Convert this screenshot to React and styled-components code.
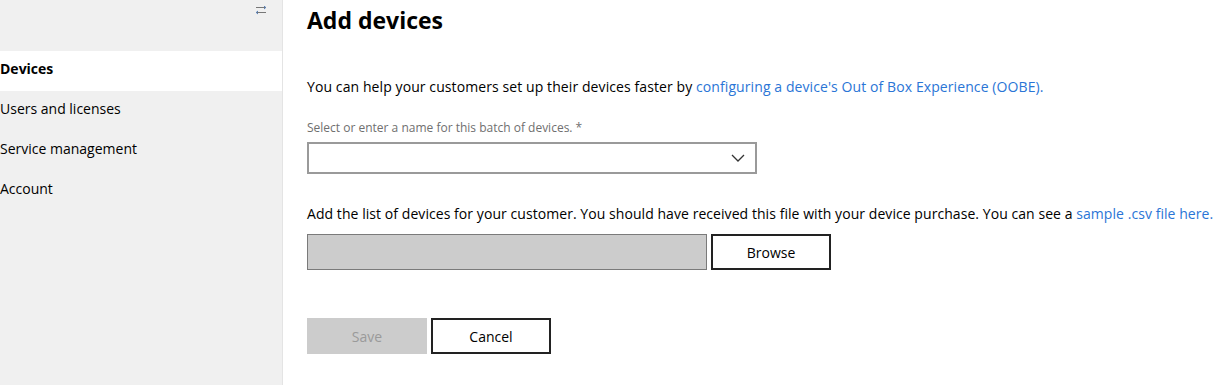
import React from "react";
import styled, { createGlobalStyle } from "styled-components";

const GlobalStyle = createGlobalStyle`
  html, body {
    margin: 0;
    padding: 0;
    background: #fff;
    font-family: "Open Sans", "Noto Sans", sans-serif;
    color: #000;
  }
`;

const navItems = [
  { id: "devices", label: "Devices" },
  { id: "users", label: "Users and licenses" },
  { id: "service", label: "Service management" },
  { id: "account", label: "Account" }
];

const ToggleIcon = () => (
  <svg width="12" height="9" viewBox="0 0 12 9" fill="none">
    <path d="M1 1.5H10.5" stroke="#777" strokeWidth="1" />
    <path d="M9 0L10.8 1.5L9 3" stroke="#4a78b8" strokeWidth="1" />
    <path d="M11 6.5H1.5" stroke="#777" strokeWidth="1" />
    <path d="M3 5L1.2 6.5L3 8" stroke="#4a78b8" strokeWidth="1" />
  </svg>
);

const Chevron = () => (
  <svg width="14" height="8" viewBox="0 0 14 8" fill="none">
    <path d="M1 1L7 7L13 1" stroke="#333" strokeWidth="1.3" />
  </svg>
);

const App = () => {
  const active = "devices";
  return (
    <Wrapper>
      <GlobalStyle />
      <Sidebar>
        <SidebarTop>
          <ToggleButton aria-label="Collapse">
            <ToggleIcon />
          </ToggleButton>
        </SidebarTop>
        {navItems.map(item => (
          <NavItem key={item.id} $active={item.id === active}>
            {item.label}
          </NavItem>
        ))}
      </Sidebar>
      <Main>
        <Title>Add devices</Title>
        <Intro>
          You can help your customers set up their devices faster by{" "}
          <Link href="#">configuring a device's Out of Box Experience (OOBE).</Link>
        </Intro>
        <Label>Select or enter a name for this batch of devices. *</Label>
        <SelectBox>
          <Chevron />
        </SelectBox>
        <Text>
          Add the list of devices for your customer. You should have received this
          file with your device purchase. You can see a{" "}
          <Link href="#">sample .csv file here.</Link>
        </Text>
        <FileRow>
          <FileField />
          <Button>Browse</Button>
        </FileRow>
        <Actions>
          <Button $disabled>Save</Button>
          <Button>Cancel</Button>
        </Actions>
      </Main>
    </Wrapper>
  );
};

const Wrapper = styled.div`
  display: flex;
  height: 385px;
  overflow: hidden;
`;

const Sidebar = styled.nav`
  width: 282px;
  flex-shrink: 0;
  background: #f0f0f0;
  border-right: 1px solid #e4e4e4;
  display: flex;
  flex-direction: column;
`;

const SidebarTop = styled.div`
  height: 51px;
  display: flex;
  justify-content: flex-end;
  align-items: flex-start;
  padding-right: 15px;
  box-sizing: border-box;
`;

const ToggleButton = styled.button`
  border: none;
  background: transparent;
  padding: 0;
  margin-top: 6px;
  width: 12px;
  height: 9px;
  display: flex;
`;

const NavItem = styled.div`
  height: 40px;
  line-height: 36px;
  padding-bottom: 4px;
  box-sizing: border-box;
  font-size: 14px;
  white-space: nowrap;
  background: ${p => (p.$active ? "#fff" : "transparent")};
  font-weight: ${p => (p.$active ? 700 : 400)};
`;

const Main = styled.main`
  flex: 1;
  padding-left: 24px;
  display: flex;
  flex-direction: column;
  align-items: flex-start;
  white-space: nowrap;
`;

const Title = styled.h1`
  margin: 0;
  font-size: 23px;
  font-weight: 700;
  line-height: 40px;
`;

const Intro = styled.p`
  margin: 36px 0 0;
  font-size: 14px;
  letter-spacing: 0.09px;
  line-height: 22px;
`;

const Text = styled.p`
  margin: 29px 0 0;
  font-size: 14px;
  letter-spacing: 0.06px;
  line-height: 22px;
`;

const Link = styled.a`
  color: #2a75d6;
  text-decoration: none;
`;

const Label = styled.div`
  margin-top: 21px;
  font-size: 12px;
  line-height: 18px;
  color: #6f6f6f;
`;

const SelectBox = styled.div`
  margin-top: 5px;
  width: 450px;
  height: 32px;
  box-sizing: border-box;
  border: 2px solid #9a9a9a;
  display: flex;
  align-items: center;
  justify-content: flex-end;
  padding-right: 10px;
`;

const FileRow = styled.div`
  margin-top: 9px;
  display: flex;
  gap: 4px;
`;

const FileField = styled.div`
  width: 400px;
  height: 36px;
  box-sizing: border-box;
  background: #cccccc;
  border: 1px solid #7a7a7a;
`;

const Button = styled.button`
  width: 120px;
  height: 36px;
  box-sizing: border-box;
  font-family: inherit;
  font-size: 14px;
  cursor: ${p => (p.$disabled ? "default" : "pointer")};
  background: ${p => (p.$disabled ? "#cccccc" : "#fff")};
  color: ${p => (p.$disabled ? "#9a9a9a" : "#000")};
  border: ${p => (p.$disabled ? "none" : "2px solid #222")};
`;

const Actions = styled.div`
  margin-top: 48px;
  display: flex;
  gap: 4px;
`;

export default App;
